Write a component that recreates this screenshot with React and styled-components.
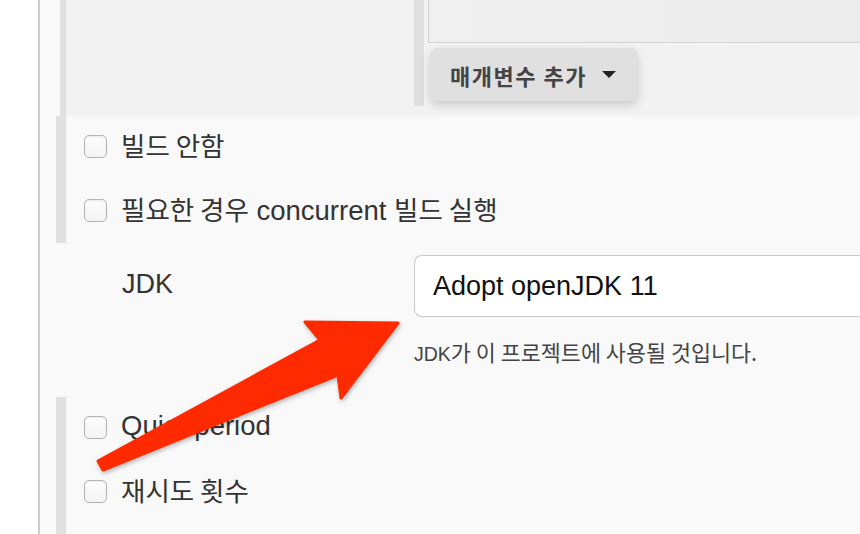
import React from 'react'
import styled, { createGlobalStyle } from 'styled-components'

const GlobalStyle = createGlobalStyle`
  html, body {
    margin: 0;
    padding: 0;
    background: #fff;
    overflow: hidden;
  }
  body {
    font-family: "Liberation Sans", "Noto Sans CJK KR", sans-serif;
    color: #333;
  }
`

const Page = styled.div`
  position: relative;
  display: flex;
  height: 534px;
  padding-left: 38px;
  overflow: hidden;
`

const Panel = styled.main`
  flex: 1;
  border-left: 2px solid #cdcdcd;
  background: #f9f9f9;
  padding-left: 16px;
  display: flex;
  flex-direction: column;
`

const ParamSection = styled.section`
  margin-left: 4px;
  border-left: 6px solid #e1e1e1;
  background: #f2f2f2;
  height: 116px;
  box-sizing: border-box;
  padding-bottom: 10px;
  display: grid;
  grid-template-columns: 348px 10px 1fr;
`

const InnerBar = styled.div`
  grid-column: 2;
  background: #dfdfdf;
`

const ParamBody = styled.div`
  grid-column: 3;
  padding-left: 4px;
  display: flex;
  flex-direction: column;
  align-items: flex-start;
`

const TextBox = styled.div`
  align-self: stretch;
  height: 43px;
  box-sizing: border-box;
  border: 1px solid #d3d3d3;
  border-top: none;
  border-right: none;
  background: linear-gradient(90deg, #f0f0f0, #ececec);
`

const AddButton = styled.button`
  margin: 5px 0 0 2px;
  width: 208px;
  height: 53px;
  border: none;
  border-radius: 8px;
  background: #e0e0e0;
  box-shadow: 0 4px 10px rgba(0, 0, 0, 0.16);
  display: flex;
  align-items: center;
  padding: 0 0 0 20px;
  font-family: "Noto Sans CJK KR", sans-serif;
  font-weight: 700;
  font-size: 22px;
  letter-spacing: 1.5px;
  color: #444;
`

const Caret = styled.span`
  margin-left: 15px;
  width: 0;
  height: 0;
  border-left: 7px solid transparent;
  border-right: 7px solid transparent;
  border-top: 7px solid #222;
`

const Group = styled.div`
  border-left: 10px solid #e0e0e0;
  display: flex;
  flex-direction: column;
  gap: 4px;
  padding-bottom: ${p => p.$bottom || 0}px;
  flex: ${p => (p.$grow ? 1 : 'none')};
`

const CheckRow = styled.label`
  height: 60px;
  display: flex;
  align-items: center;
  padding-left: 18px;
  gap: 14px;
  font-size: 27.5px;
  color: #333;
`

const Box = styled.input.attrs({ type: 'checkbox' })`
  appearance: none;
  margin: 0;
  width: 23px;
  height: 23px;
  flex: none;
  box-sizing: border-box;
  border: 1px solid #b4b4b4;
  border-radius: 5px;
  background: linear-gradient(#fdfdfd, #f4f4f4);
  box-shadow: inset 0 1px 2px rgba(0, 0, 0, 0.08);
`

const Label = styled.span`
  margin-top: -3px;
`

const Ko = styled.span`
  font-family: "Noto Sans CJK KR", sans-serif;
  font-size: 26.5px;
`

const Setting = styled.div`
  display: grid;
  grid-template-columns: 358px 1fr;
  padding: 12px 0 34px;
`

const SettingLabel = styled.div`
  padding-left: 66px;
  height: 62px;
  display: flex;
  align-items: center;
  padding-bottom: 4px;
  box-sizing: border-box;
  font-size: 27px;
  color: #333;
`

const Field = styled.div`
  display: flex;
  flex-direction: column;
`

const Select = styled.div`
  height: 62px;
  box-sizing: border-box;
  border: 1px solid #c9c9c9;
  border-right: none;
  border-radius: 8px 0 0 8px;
  background: #fff;
  display: flex;
  align-items: center;
  padding-left: 18px;
  font-size: 27px;
  color: #111;
`

const Help = styled.div`
  margin-top: 24px;
  height: 22px;
  font-size: 19.5px;
  color: #444;
  line-height: 22px;
`

const HelpKo = styled.span`
  font-family: "Noto Sans CJK KR", sans-serif;
  font-size: 21.8px;
`

const Arrow = styled.svg`
  position: absolute;
  left: 0;
  top: 0;
  pointer-events: none;
  filter: drop-shadow(1px 2px 2px rgba(0, 0, 0, 0.28));
`

function Check({ children }) {
  return (
    <CheckRow>
      <Box />
      <Label>{children}</Label>
    </CheckRow>
  )
}

export default function App() {
  return (
    <>
      <GlobalStyle />
      <Page>
        <Panel>
          <ParamSection>
            <InnerBar />
            <ParamBody>
              <TextBox />
              <AddButton>
                매개변수 추가
                <Caret />
              </AddButton>
            </ParamBody>
          </ParamSection>

          <Group $bottom={3}>
            <Check>
              <Ko>빌드 안함</Ko>
            </Check>
            <Check>
              <Ko>필요한 경우</Ko> concurrent <Ko>빌드 실행</Ko>
            </Check>
          </Group>

          <Setting>
            <SettingLabel>JDK</SettingLabel>
            <Field>
              <Select>Adopt openJDK 11</Select>
              <Help>
                JDK<HelpKo>가 이 프로젝트에 사용될 것입니다.</HelpKo>
              </Help>
            </Field>
          </Setting>

          <Group $grow>
            <Check>Quiet period</Check>
            <Check>
              <Ko>재시도 횟수</Ko>
            </Check>
          </Group>
        </Panel>

        <Arrow width="860" height="534" viewBox="0 0 860 534">
          <polygon
            points="98,461 320,340 305,322 398,323 341,398 338,375 103,470"
            fill="#ff2a00"
            stroke="#ff2a00"
            strokeWidth="3"
            strokeLinejoin="round"
          />
        </Arrow>
      </Page>
    </>
  )
}
